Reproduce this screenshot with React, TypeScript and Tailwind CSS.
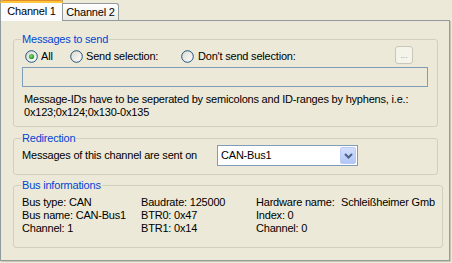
import React from "react";

function Radio({ checked }: { checked?: boolean }) {
  const id = checked ? "rgc" : "rgu";
  return (
    <svg width="13" height="13" viewBox="0 0 13 13" className="shrink-0">
      <defs>
        <linearGradient id={id} x1="0" y1="0" x2="1" y2="1">
          <stop offset="0" stopColor="#dcd8cc" />
          <stop offset="1" stopColor="#ffffff" />
        </linearGradient>
        <radialGradient id={id + "d"} cx="0.4" cy="0.4" r="0.6">
          <stop offset="0" stopColor="#7be07b" />
          <stop offset="1" stopColor="#1f9a1f" />
        </radialGradient>
      </defs>
      <circle cx="6.5" cy="6.5" r="5.8" fill={`url(#${id})`} stroke="#1c5180" strokeWidth="1" />
      {checked && <circle cx="6.5" cy="6.5" r="2.6" fill={`url(#${id}d)`} />}
    </svg>
  );
}

export default function App() {
  return (
    <div className="w-[452px] h-[263px] bg-[#ece9d8] text-[11px] leading-[13px] tracking-[-0.2px] text-black overflow-hidden font-['Liberation_Sans',Arial,sans-serif]">
      {/* Tabs */}
      <div className="flex items-end h-[20px] relative z-10">
        <div className="relative w-[63px] h-[21px] -mb-px border-x border-[#919b9c] bg-[#fcfcfe] flex items-center justify-center pt-[2px]">
          <div className="absolute top-0 left-[-1px] right-[-1px] h-[3px] bg-[#ffc83c] border-t border-[#e68b2c] rounded-t-[3px]" />
          Channel 1
        </div>
        <div className="w-[56px] h-[17px] border-t border-r border-[#919b9c] rounded-tr-[3px] bg-gradient-to-b from-white to-[#ecebe5] flex items-center justify-center">
          Channel 2
        </div>
      </div>

      {/* Panel */}
      <div className="w-[450px] h-[241px] border border-[#919b9c] bg-[#ece9d8] pl-[12px] pr-[11px] pt-[12px] shadow-[1px_1px_0_#c9c6b6]">
        {/* Messages to send */}
        <fieldset className="border border-[#d0d0bf] rounded-[3px] px-[7px] pb-[7px]">
          <legend className="px-[1px] text-[#0046d5] leading-[13px]">Messages to send</legend>
          <div className="mt-[3px] h-[15px] flex items-center">
            <div className="w-[49px] pl-[4px] flex items-center gap-[3px]">
              <Radio checked />
              <span>All</span>
            </div>
            <div className="w-[111px] flex items-center gap-[3px]">
              <Radio />
              <span>Send selection:</span>
            </div>
            <div className="flex items-center gap-[4px]">
              <Radio />
              <span>Don't send selection:</span>
            </div>
            <div className="ml-auto mr-[17px] self-start -mt-[3px] w-[18px] h-[18px] border border-[#c9c7ba] rounded-[3px] bg-[#f5f4ea] text-[#aca899] text-[9px] leading-[12px] flex items-center justify-center">
              ...
            </div>
          </div>
          <div className="mt-[3px] h-[20px] ml-[1px] mr-[2px] border border-[#7f9db9]" />
          <div className="mt-[6px] ml-[3px]">
            <div>Message-IDs have to be seperated by semicolons and ID-ranges by hyphens, i.e.:</div>
            <div>0x123;0x124;0x130-0x135</div>
          </div>
        </fieldset>

        {/* Redirection */}
        <fieldset className="mt-[5px] border border-[#d0d0bf] rounded-[3px] px-[7px] pb-[8px]">
          <legend className="px-[1px] text-[#0046d5] leading-[13px]">Redirection</legend>
          <div className="h-[21px] flex items-center">
            <div className="w-[196px] pl-[1px]">Messages of this channel are sent on</div>
            <div className="w-[141px] h-[21px] border border-[#7f9db9] bg-white flex items-center pl-[3px] pr-[1px]">
              <span className="flex-1">CAN-Bus1</span>
              <div className="w-[16px] h-[17px] rounded-[2px] border border-[#b9cbf6] bg-gradient-to-b from-[#d2defc] to-[#b2c6f5] flex items-center justify-center">
                <svg width="9" height="6" viewBox="0 0 9 6">
                  <path d="M1 1 L4.5 4.5 L8 1" fill="none" stroke="#4d6185" strokeWidth="2" />
                </svg>
              </div>
            </div>
          </div>
        </fieldset>

        {/* Bus informations */}
        <fieldset className="mt-[4px] border border-[#d0d0bf] rounded-[3px] px-[7px] pb-[12px]">
          <legend className="px-[1px] text-[#0046d5] leading-[13px]">Bus informations</legend>
          <div className="mt-[4px] ml-[1px] flex">
            <div className="w-[119px] flex flex-col">
              <span>Bus type: CAN</span>
              <span>Bus name: CAN-Bus1</span>
              <span>Channel: 1</span>
            </div>
            <div className="w-[115px] flex flex-col">
              <span>Baudrate: 125000</span>
              <span>BTR0: 0x47</span>
              <span>BTR1: 0x14</span>
            </div>
            <div className="w-[85px] flex flex-col">
              <span>Hardware name:</span>
              <span>Index: 0</span>
              <span>Channel: 0</span>
            </div>
            <div className="flex-1 whitespace-nowrap overflow-hidden">Schleißheimer Gmb</div>
          </div>
        </fieldset>
      </div>
    </div>
  );
}
